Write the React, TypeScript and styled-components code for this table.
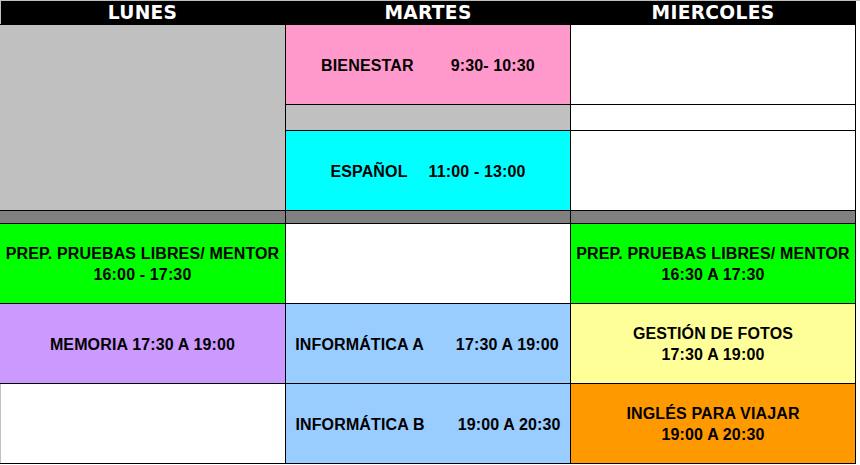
import React from "react";
import styled, { createGlobalStyle } from "styled-components";

const GlobalStyle = createGlobalStyle`
  html, body {
    margin: 0;
    padding: 0;
    background: #ffffff;
  }
  body {
    font-family: "Liberation Sans", Arial, sans-serif;
  }
`;

const Page = styled.div`
  border-top: 1px solid #c0c0c0;
  width: 860px;
  height: 464px;
  background: #ffffff;
`;

const Sheet = styled.div`
  display: grid;
  grid-template-columns: 285px 284px 284px;
  grid-template-rows: 23px 79px 25px 79px 12px 79px 79px 79px;
  gap: 1px;
  background: #000000;
  border-right: 1px solid #000000;
  border-bottom: 1px solid #000000;
  width: fit-content;
`;

const HeaderCell = styled.div<{ $gridLeft?: boolean }>`
  background: #000000;
  color: #ffffff;
  font-family: "DejaVu Sans", Verdana, sans-serif;
  font-weight: bold;
  font-size: 18.67px;
  letter-spacing: 0.3px;
  line-height: 22px;
  padding-top: 1px;
  display: flex;
  align-items: center;
  justify-content: center;
  box-shadow: ${(p) => (p.$gridLeft ? "inset 1px 0 0 #c0c0c0" : "none")};
`;

const Cell = styled.div<{ $bg: string; $rows?: number; $gridLeft?: boolean }>`
  background: ${(p) => p.$bg};
  grid-row: ${(p) => (p.$rows ? `span ${p.$rows}` : "auto")};
  display: flex;
  align-items: center;
  justify-content: center;
  box-shadow: ${(p) => (p.$gridLeft ? "inset 1px 0 0 #c0c0c0" : "none")};
`;

const CellText = styled.div`
  font-family: "Liberation Sans", Arial, sans-serif;
  font-weight: bold;
  font-size: 16px;
  letter-spacing: 0.14px;
  line-height: 21px;
  color: #000000;
  text-align: center;
  white-space: nowrap;
  padding-top: 1px;
`;

const Pair = styled.div<{ $gap: number; $shift?: number }>`
  display: flex;
  gap: ${(p) => p.$gap}px;
  margin-left: ${(p) => p.$shift ?? 0}px;
  font-family: "Liberation Sans", Arial, sans-serif;
  font-weight: bold;
  font-size: 16px;
  letter-spacing: 0.14px;
  line-height: 21px;
  color: #000000;
  white-space: nowrap;
  padding-top: 1px;
`;

const C = {
  silver: "#c0c0c0",
  gray: "#808080",
  white: "#ffffff",
  pink: "#ff99cc",
  cyan: "#00ffff",
  green: "#00ff00",
  purple: "#cc99ff",
  blue: "#99ccff",
  yellow: "#ffff99",
  orange: "#ff9900",
};

export default function App() {
  return (
    <>
      <GlobalStyle />
      <Page>
        <Sheet>
          <HeaderCell $gridLeft>LUNES</HeaderCell>
          <HeaderCell>MARTES</HeaderCell>
          <HeaderCell>MIERCOLES</HeaderCell>

          <Cell $bg={C.silver} $rows={3} />
          <Cell $bg={C.pink}>
            <Pair $gap={37}>
              <span>BIENESTAR</span>
              <span>9:30- 10:30</span>
            </Pair>
          </Cell>
          <Cell $bg={C.white} />

          <Cell $bg={C.silver} />
          <Cell $bg={C.white} />

          <Cell $bg={C.cyan}>
            <Pair $gap={21}>
              <span>ESPAÑOL</span>
              <span>11:00 - 13:00</span>
            </Pair>
          </Cell>
          <Cell $bg={C.white} />

          <Cell $bg={C.gray} />
          <Cell $bg={C.gray} />
          <Cell $bg={C.gray} />

          <Cell $bg={C.green}>
            <CellText>
              PREP. PRUEBAS LIBRES/ MENTOR
              <br />
              16:00 - 17:30
            </CellText>
          </Cell>
          <Cell $bg={C.white} />
          <Cell $bg={C.green}>
            <CellText>
              PREP. PRUEBAS LIBRES/ MENTOR
              <br />
              16:30 A 17:30
            </CellText>
          </Cell>

          <Cell $bg={C.purple}>
            <CellText>MEMORIA 17:30 A 19:00</CellText>
          </Cell>
          <Cell $bg={C.blue}>
            <Pair $gap={32} $shift={-2}>
              <span>INFORMÁTICA A</span>
              <span>17:30 A 19:00</span>
            </Pair>
          </Cell>
          <Cell $bg={C.yellow}>
            <CellText>
              GESTIÓN DE FOTOS
              <br />
              17:30 A 19:00
            </CellText>
          </Cell>

          <Cell $bg={C.white} $gridLeft />
          <Cell $bg={C.blue}>
            <Pair $gap={33}>
              <span>INFORMÁTICA B</span>
              <span>19:00 A 20:30</span>
            </Pair>
          </Cell>
          <Cell $bg={C.orange}>
            <CellText>
              INGLÉS PARA VIAJAR
              <br />
              19:00 A 20:30
            </CellText>
          </Cell>
        </Sheet>
      </Page>
    </>
  );
}
